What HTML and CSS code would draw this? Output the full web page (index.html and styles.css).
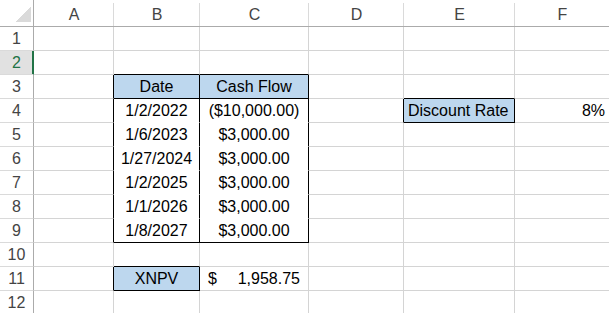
FILE: index.html
```html
<!DOCTYPE html>
<html>
<head>
<meta charset="utf-8">
<link rel="stylesheet" href="styles.css">
</head>
<body>
<div class="sheet">
  <div class="corner"></div><div class="h">A</div><div class="h">B</div><div class="h">C</div><div class="h">D</div><div class="h">E</div><div class="h">F</div>

  <div class="rh">1</div><div class="c"></div><div class="c"></div><div class="c"></div><div class="c"></div><div class="c"></div><div class="c"></div>

  <div class="rh sel">2</div><div class="c"></div><div class="c bb"></div><div class="c bb"></div><div class="c"></div><div class="c"></div><div class="c"></div>

  <div class="rh">3</div><div class="c br"></div><div class="c fill ctr br bb">Date</div><div class="c fill ctr br bb">Cash Flow</div><div class="c"></div><div class="c bb"></div><div class="c"></div>

  <div class="rh">4</div><div class="c br"></div><div class="c ctr br nb">1/2/2022</div><div class="c ctr br nb">($10,000.00)</div><div class="c br"></div><div class="c fill lft br bb">Discount Rate</div><div class="c rgt">8%</div>

  <div class="rh">5</div><div class="c br"></div><div class="c ctr br nb">1/6/2023</div><div class="c ctr br nb">$3,000.00</div><div class="c"></div><div class="c"></div><div class="c"></div>

  <div class="rh">6</div><div class="c br"></div><div class="c ctr br nb">1/27/2024</div><div class="c ctr br nb">$3,000.00</div><div class="c"></div><div class="c"></div><div class="c"></div>

  <div class="rh">7</div><div class="c br"></div><div class="c ctr br nb">1/2/2025</div><div class="c ctr br nb">$3,000.00</div><div class="c"></div><div class="c"></div><div class="c"></div>

  <div class="rh">8</div><div class="c br"></div><div class="c ctr br nb">1/1/2026</div><div class="c ctr br nb">$3,000.00</div><div class="c"></div><div class="c"></div><div class="c"></div>

  <div class="rh">9</div><div class="c br"></div><div class="c ctr br bb">1/8/2027</div><div class="c ctr br bb">$3,000.00</div><div class="c"></div><div class="c"></div><div class="c"></div>

  <div class="rh">10</div><div class="c"></div><div class="c bb"></div><div class="c"></div><div class="c"></div><div class="c"></div><div class="c"></div>

  <div class="rh">11</div><div class="c br"></div><div class="c fill ctr br bb">XNPV</div><div class="c acct"><span>$</span><span>1,958.75</span></div><div class="c"></div><div class="c"></div><div class="c"></div>

  <div class="rh">12</div><div class="c"></div><div class="c"></div><div class="c"></div><div class="c"></div><div class="c"></div><div class="c"></div>
</div>
</body>
</html>
```
FILE: styles.css
```css
html, body {
  margin: 0;
  padding: 0;
  background: #fff;
  overflow: hidden;
}

.sheet {
  display: grid;
  grid-template-columns: 34px 80px 86px 109px 95px 111px 95px;
  grid-template-rows: 27px repeat(12, 24px);
  font-family: "Liberation Sans", Arial, sans-serif;
  font-size: 16px;
  color: #000;
}

.sheet > div {
  box-sizing: border-box;
  white-space: nowrap;
  line-height: 23px;
}

.corner {
  border-right: 1px solid #ababab;
  border-bottom: 1px solid #ababab;
  background: linear-gradient(to bottom right, transparent 50%, #dadada 50%) no-repeat right 2px bottom 4px / 15px 16px, #fff;
}

.h {
  border-bottom: 1px solid #ababab;
  background: linear-gradient(#dadada, #dadada) no-repeat right bottom / 1px 23px, #fff;
  color: #444;
  text-align: center;
  padding-top: 3px;
}

.rh {
  border-right: 1px solid #ababab;
  border-bottom: 1px solid #dadada;
  color: #444;
  text-align: center;
  background: #fff;
}

.rh.sel {
  background: #e1e1e1;
  color: #217346;
  border-right-color: #217346;
  box-shadow: inset -1px 0 0 #217346;
}

.c {
  border-right: 1px solid #d4d4d4;
  border-bottom: 1px solid #d4d4d4;
  background: #fff;
}

.fill { background: #bdd7ee; }
.ctr { text-align: center; }
.lft { padding-left: 4px; }
.rgt { text-align: right; padding-right: 4px; }
.br { border-right-color: #000; }
.bb { border-bottom-color: #000; }
.nb { border-bottom-color: #fff; }

.acct {
  display: flex;
  justify-content: space-between;
  padding: 0 8px;
}
```
